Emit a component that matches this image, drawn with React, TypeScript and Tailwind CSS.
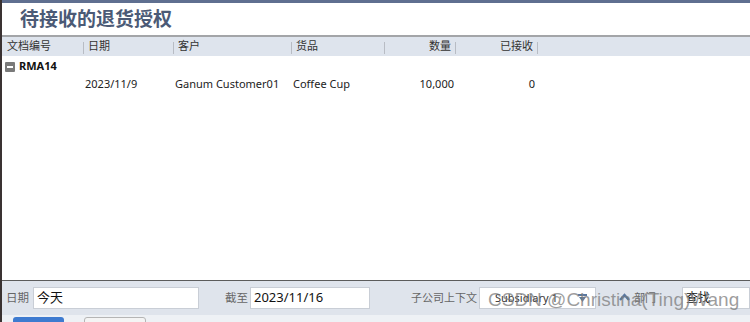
import React from 'react';

const cols = 'grid grid-cols-[81px_90px_118px_93px_72px_82px]';

const Sep = () => <span className="block w-px h-[12px] bg-[#b8bcc4] mt-[3px]" />;

const App = () => {
  return (
    <div
      className="relative w-[750px] h-[322px] overflow-hidden bg-white border-l-2 border-[#3a3232] flex flex-col text-[11px] text-[#222]"
      style={{ fontFamily: '"Noto Sans", "Noto Sans CJK SC", sans-serif' }}
    >
      <div className="h-[3px] bg-[#5f6f90]" />
      <h1 className="h-[32px] pl-[18px] pt-[3px] text-[19px] font-bold text-[#4b5a76] leading-[26px]">
        待接收的退货授权
      </h1>

      {/* column header */}
      <div className="border-t-2 border-[#a3a5a8] bg-[#dee4ed] h-[21px]">
        <div className={`${cols} h-full items-center text-[#333]`}>
          <div className="pl-[5px]">文档编号</div>
          <div className="flex items-center gap-[4px]"><Sep />日期</div>
          <div className="flex items-center gap-[4px]"><Sep />客户</div>
          <div className="flex items-center gap-[4px]"><Sep />货品</div>
          <div className="flex items-center justify-between"><Sep /><span className="ml-auto mr-[4px]">数量</span><Sep /></div>
          <div className="flex items-center justify-end gap-[4px]"><span>已接收</span><Sep /></div>
        </div>
      </div>

      {/* group row */}
      <div className="flex items-center h-[19px] mt-[1px] pl-[3px] gap-[4px]">
        <span className="w-[10px] h-[10px] bg-[#7a7a7a] rounded-[1px] flex items-center justify-center">
          <span className="w-[6px] h-[2px] bg-white" />
        </span>
        <span className="font-bold text-[#111]">RMA14</span>
      </div>

      {/* data row */}
      <div className={`${cols} h-[17px] items-center text-[#222]`}>
        <div />
        <div className="pl-[2px]">2023/11/9</div>
        <div className="pl-[2px]">Ganum Customer01</div>
        <div className="pl-[2px]">Coffee Cup</div>
        <div className="text-right pr-[2px]">10,000</div>
        <div className="text-right pr-[3px]">0</div>
      </div>

      <div className="flex-1" />

      {/* filter bar */}
      <div className="border-t border-[#5c5c5c] bg-[#dfe4ec] h-[35px] flex items-center text-[#666] text-[11.5px] whitespace-nowrap">
        <span className="ml-[4px] w-[27px]">日期</span>
        <div className="w-[166px] h-[22px] bg-white border border-[#c9ced6] px-[3px] flex items-center text-[#111] text-[13px]">今天</div>
        <span className="ml-[26px] w-[25px]">截至</span>
        <div className="w-[120px] h-[22px] bg-white border border-[#c9ced6] px-[3px] flex items-center text-[#111] text-[13px]">2023/11/16</div>
        <span className="ml-[41px] w-[68px] text-[11px]">子公司上下文</span>
        <div className="w-[117px] h-[22px] bg-white border border-[#c9ced6] pl-[15px] pr-[8px] flex items-center justify-between text-[#333] text-[11px]">
          <span>Subsidiary 1</span>
          <svg width="9" height="9" viewBox="0 0 9 9">
            <rect x="0" y="0" width="9" height="2" fill="#5a78a0" />
            <path d="M1 3 L8 3 L4.5 8 Z" fill="#5a78a0" />
          </svg>
        </div>
        <svg className="ml-[23px]" width="11" height="10" viewBox="0 0 11 10">
          <path d="M1 7 L5.5 2 L10 7" stroke="#5a78a0" strokeWidth="2.5" fill="none" />
        </svg>
        <span className="ml-[4px] w-[48px] text-[11px]">部门</span>
        <div className="flex-1 h-[22px] bg-white border border-[#c9ced6] px-[3px] flex items-center text-[#111] text-[12px]">查找</div>
      </div>

      {/* buttons row */}
      <div className="h-[7px] bg-[#eef1f5] flex items-start pt-[2px]">
        <div className="ml-[11px] w-[51px] h-[6px] bg-[#3e7bd0] rounded-t-[3px]" />
        <div className="ml-[20px] w-[62px] h-[6px] bg-[#f4f4f4] border border-[#b5b5b5] rounded-t-[3px]" />
      </div>

      {/* watermark */}
      <div
        className="absolute left-[486px] top-[286px] text-[19px] text-[#7d7d7d]/75 whitespace-nowrap pointer-events-none"
        style={{ fontFamily: '"Liberation Sans", sans-serif' }}
      >
        CSDN @Christina(Ting)Wang
      </div>
    </div>
  );
};

export default App;
